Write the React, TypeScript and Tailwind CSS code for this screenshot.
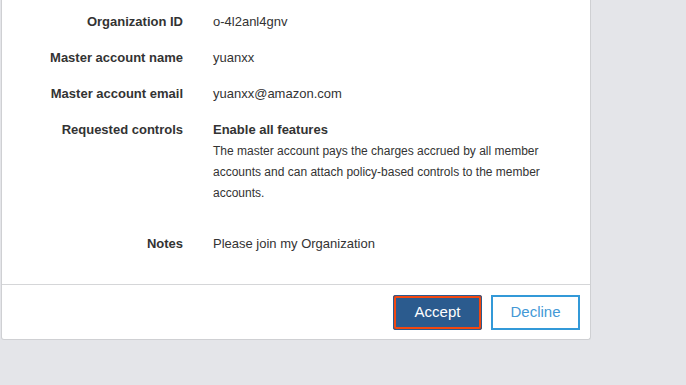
import React from 'react';

const rows = [
    { label: 'Organization ID', value: 'o-4l2anl4gnv' },
    { label: 'Master account name', value: 'yuanxx' },
    { label: 'Master account email', value: 'yuanxx@amazon.com' },
];

export default function App() {
    return (
        <div className="w-[686px] h-[385px] bg-[#e4e5e9] overflow-hidden" style={{ fontFamily: '"Liberation Sans", Arial, sans-serif' }}>
            <div className="ml-px w-[590px] bg-white border border-t-0 border-[#cfd0d3] rounded-b-[3px] text-[#333]">
                <div className="pt-[12px] pb-[30px] flex flex-col gap-4">
                    {rows.map(r => (
                        <div key={r.label} className="flex items-start">
                            <div className="w-[181px] text-right font-bold text-[13px] leading-5">{r.label}</div>
                            <div className="ml-[30px] text-[13px] leading-5">{r.value}</div>
                        </div>
                    ))}
                    <div className="flex items-start mb-[14px]">
                        <div className="w-[181px] text-right font-bold text-[13px] leading-5">Requested controls</div>
                        <div className="ml-[30px] w-[340px]">
                            <div className="font-bold text-[13px] leading-5">Enable all features</div>
                            <p className="text-[12px] leading-[21px] mt-[0.5px]">
                                The master account pays the charges accrued by all member accounts and can attach policy-based controls to the member accounts.
                            </p>
                        </div>
                    </div>
                    <div className="flex items-start">
                        <div className="w-[181px] text-right font-bold text-[13px] leading-5">Notes</div>
                        <div className="ml-[30px] text-[13px] leading-5">Please join my Organization</div>
                    </div>
                </div>
                <div className="border-t border-[#d5d6d8] flex justify-end gap-[9px] pt-[10px] pb-[9px] pr-[10px]">
                    <button className="w-[89px] h-[35px] bg-[#2b5b8e] text-white text-[15px] rounded-[3px] shadow-[inset_0_0_0_1px_#2b5b8e,inset_0_0_0_3px_#f3470f]">
                        Accept
                    </button>
                    <button className="w-[89px] h-[35px] bg-white border-2 border-[#3399d8] text-[#4399d6] text-[15px]">
                        Decline
                    </button>
                </div>
            </div>
        </div>
    );
}
